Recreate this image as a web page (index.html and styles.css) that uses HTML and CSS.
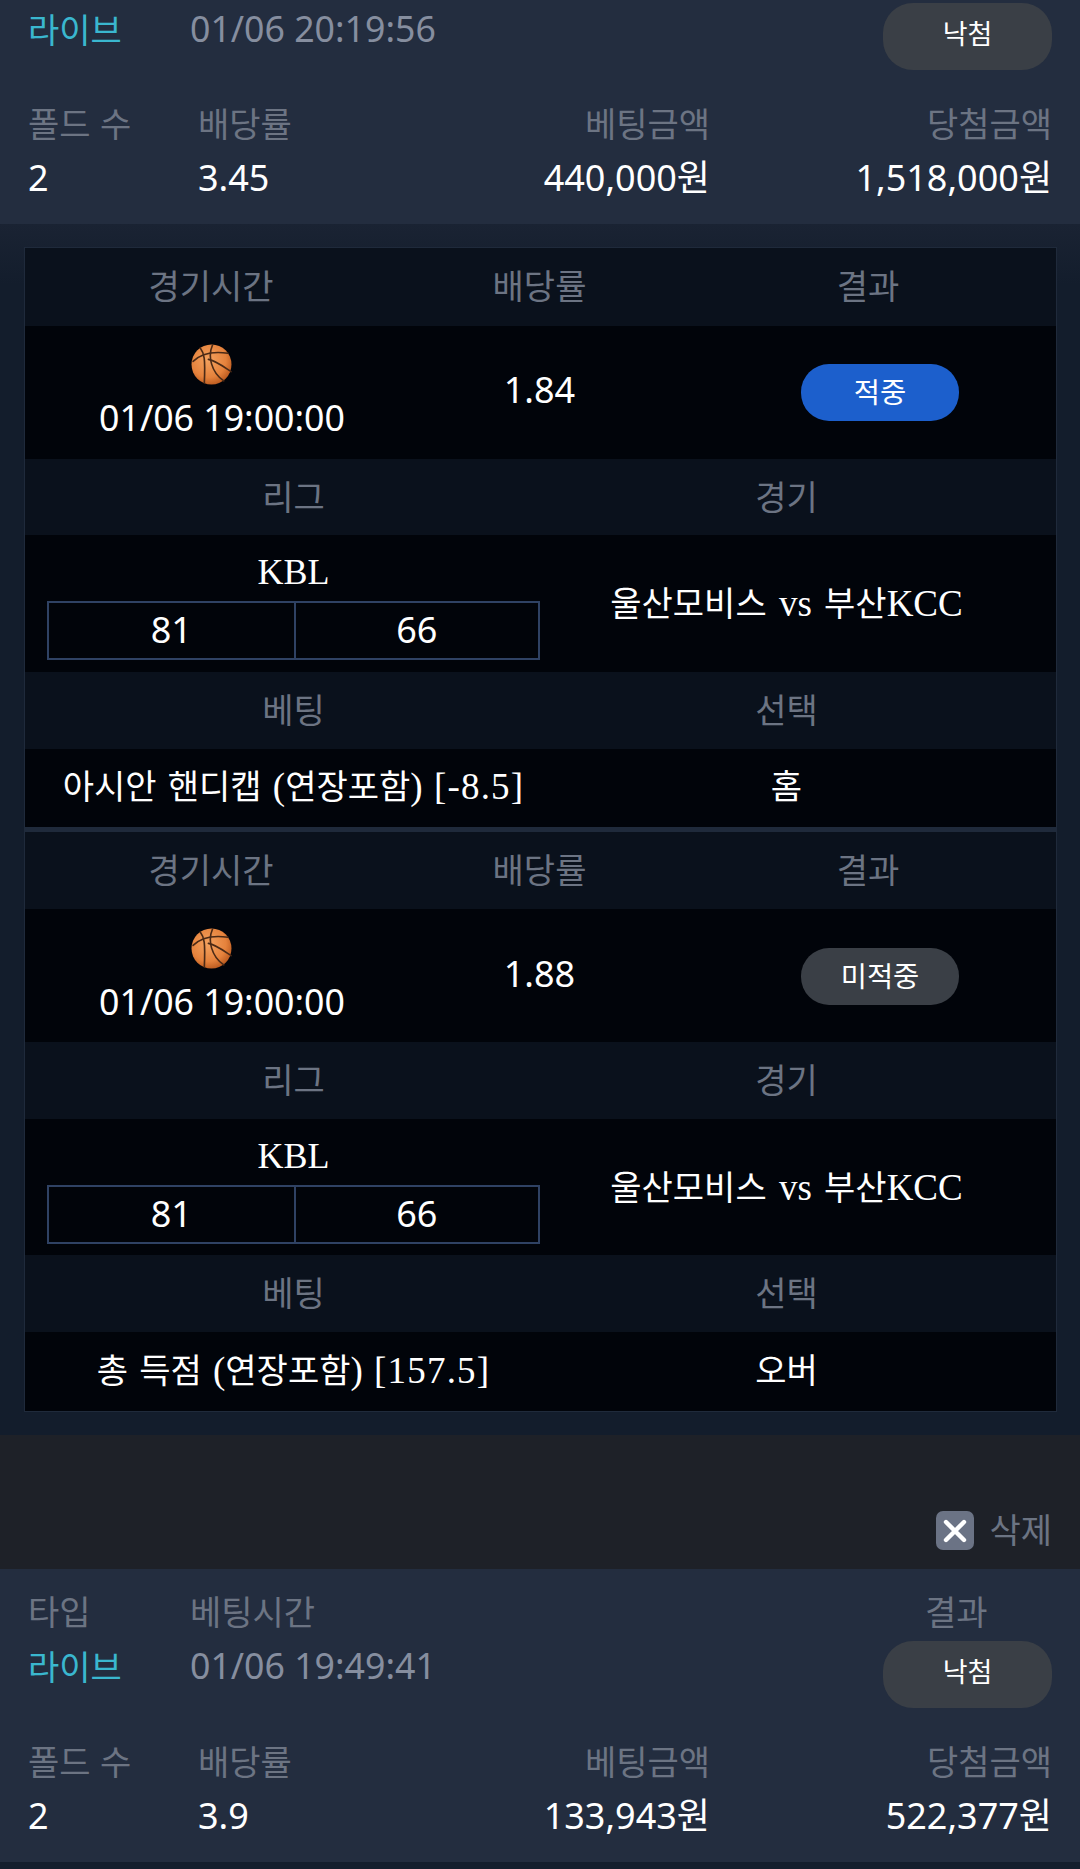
FILE: index.html
```html
<!DOCTYPE html>
<html lang="ko">

<head>
    <meta charset="UTF-8">
    <meta name="viewport" content="width=device-width, initial-scale=1.0">
    <title>베팅내역</title>
    <link rel="stylesheet" href="styles.css">
</head>

<body>
    <svg class="defs" width="0" height="0" aria-hidden="true">
        <defs>
            <radialGradient id="ballFill" cx="42%" cy="38%" r="68%">
                <stop offset="0" stop-color="#f4a25f"/>
                <stop offset="0.65" stop-color="#e5823c"/>
                <stop offset="1" stop-color="#b4541b"/>
            </radialGradient>
            <symbol id="ball" viewBox="0 0 40 40">
                <circle cx="20" cy="20" r="19.5" fill="url(#ballFill)"/>
                <g fill="none" stroke="#4b2a16" stroke-width="1.6" stroke-linecap="round">
                    <path d="M2 17 C10 9 22 7 36 9"/>
                    <path d="M9 4 C13 9 14 14 13 38"/>
                    <path d="M21 1 C16 12 20 28 32 36"/>
                    <path d="M17 15 C24 16 33 23 39 27"/>
                </g>
            </symbol>
        </defs>
    </svg>

    <div class="page">
        <!-- 첫번째 내역 (위쪽이 스크롤로 잘린 상태) -->
        <section class="ticket ticket-cut">
            <div class="ticket-top">
                <div class="col-type">
                    <div class="live">라이브</div>
                </div>
                <div class="col-time">
                    <div class="time">01/06 20:19:56</div>
                </div>
                <div class="col-result">
                    <div class="lost-btn">낙첨</div>
                </div>
            </div>
            <div class="ticket-sum">
                <div class="label">폴드 수</div>
                <div class="label">배당률</div>
                <div class="label right">베팅금액</div>
                <div class="label right">당첨금액</div>
                <div class="value">2</div>
                <div class="value">3.45</div>
                <div class="value right">440,000원</div>
                <div class="value right">1,518,000원</div>
            </div>
        </section>

        <div class="panel">
            <div class="bet-table">
                <div class="head row-three head-first">
                    <div class="shift-time">경기시간</div>
                    <div>배당률</div>
                    <div>결과</div>
                </div>
                <div class="body row-three row-game">
                    <div class="game-time">
                        <svg class="ball"><use href="#ball"/></svg>
                        <div class="game-date">01/06 19:00:00</div>
                    </div>
                    <div class="odds">1.84</div>
                    <div class="result-cell"><span class="pill pill-hit">적중</span></div>
                </div>
                <div class="head row-two">
                    <div>리그</div>
                    <div>경기</div>
                </div>
                <div class="body row-two row-league">
                    <div class="league">
                        <div class="league-name">KBL</div>
                        <div class="score">
                            <div>81</div>
                            <div>66</div>
                        </div>
                    </div>
                    <div class="match"><span class="ko">울산모비스</span> vs <span class="ko">부산</span>KCC</div>
                </div>
                <div class="head row-two">
                    <div>베팅</div>
                    <div>선택</div>
                </div>
                <div class="body row-two row-bet">
                    <div class="mixed"><span class="ko">아시안</span> <span class="ko">핸디캡</span> (<span class="ko">연장포함</span>) <span class="bracket">[-8.5]</span></div>
                    <div class="pick">홈</div>
                </div>

                <div class="divider"></div>

                <div class="head row-three">
                    <div class="shift-time">경기시간</div>
                    <div>배당률</div>
                    <div>결과</div>
                </div>
                <div class="body row-three row-game">
                    <div class="game-time">
                        <svg class="ball"><use href="#ball"/></svg>
                        <div class="game-date">01/06 19:00:00</div>
                    </div>
                    <div class="odds">1.88</div>
                    <div class="result-cell"><span class="pill pill-miss">미적중</span></div>
                </div>
                <div class="head row-two">
                    <div>리그</div>
                    <div>경기</div>
                </div>
                <div class="body row-two row-league">
                    <div class="league">
                        <div class="league-name">KBL</div>
                        <div class="score">
                            <div>81</div>
                            <div>66</div>
                        </div>
                    </div>
                    <div class="match"><span class="ko">울산모비스</span> vs <span class="ko">부산</span>KCC</div>
                </div>
                <div class="head row-two">
                    <div>베팅</div>
                    <div>선택</div>
                </div>
                <div class="body row-two row-bet">
                    <div class="mixed"><span class="ko">총</span> <span class="ko">득점</span> (<span class="ko">연장포함</span>) <span class="bracket">[157.5]</span></div>
                    <div class="pick">오버</div>
                </div>
            </div>
        </div>

        <!-- 두번째 내역 -->
        <div class="delete-bar">
            <span class="delete-x">
                <svg width="24" height="24" viewBox="0 0 24 24"><path d="M3 3 L21 21 M21 3 L3 21" stroke="#fff" stroke-width="4.4" stroke-linecap="round"/></svg>
            </span>
            <span class="delete-text">삭제</span>
        </div>

        <section class="ticket">
            <div class="ticket-top">
                <div class="col-type">
                    <div class="label">타입</div>
                    <div class="live">라이브</div>
                </div>
                <div class="col-time">
                    <div class="label">베팅시간</div>
                    <div class="time">01/06 19:49:41</div>
                </div>
                <div class="col-result">
                    <div class="label">결과</div>
                    <div class="lost-btn">낙첨</div>
                </div>
            </div>
            <div class="ticket-sum">
                <div class="label">폴드 수</div>
                <div class="label">배당률</div>
                <div class="label right">베팅금액</div>
                <div class="label right">당첨금액</div>
                <div class="value">2</div>
                <div class="value">3.9</div>
                <div class="value right">133,943원</div>
                <div class="value right">522,377원</div>
            </div>
        </section>
        <div class="panel-rest"></div>
    </div>
</body>

</html>
```

FILE: styles.css
```css
* {
    margin: 0;
    padding: 0;
    box-sizing: border-box;
}

html,
body {
    height: 1869px;
    overflow: hidden;
    background: #141e2d;
}

body {
    font-family: "Noto Sans CJK KR", "Noto Sans", sans-serif;
    font-size: 34px;
    line-height: 53px;
    color: #fff;
}

.defs {
    position: absolute;
}

.ticket {
    height: 293px;
    padding: 15px 28px 0;
    background: #232d3f;
}

.ticket-cut {
    height: 224px;
    padding-top: 2px;
}

.ticket-top {
    display: flex;
}

.col-type {
    width: 162px;
}

.col-time {
    flex: 1;
}

.col-result {
    width: 169px;
}

.col-result .label {
    padding-left: 42px;
}

.label {
    height: 55px;
    color: #6c7483;
}

.live {
    height: 55px;
    color: #3ab7cf;
}

/* 숫자는 한글보다 크게 보임 */
.time,
.value,
.game-date,
.odds,
.score div {
    font-family: "Noto Sans", "Noto Sans CJK KR", sans-serif;
    font-size: 36px;
}

.time,
.game-date {
    font-size: 35.7px;
}

.time {
    color: #868e9f;
}

.lost-btn {
    height: 67px;
    margin-top: 2px;
    background: #3a3f46;
    border-radius: 30px;
    font-size: 27px;
    line-height: 60px;
    text-align: center;
}

.ticket-cut .lost-btn {
    margin-top: 1px;
}

.ticket-sum {
    display: grid;
    grid-template-columns: 170px 170px 342px 1fr;
    margin-top: 26px;
}

.right {
    text-align: right;
}

.panel {
    padding: 23px 23px 23px 24px;
    background: linear-gradient(#1a2333, #131d2c 5%, #131d2c);
}

.bet-table {
    border: 1px solid #1f2a3b;
    text-align: center;
}

.head {
    height: 77px;
    line-height: 74px;
    background: #0a111c;
    color: #6c7483;
}

.head-first {
    height: 78px;
}

.body {
    background: #01040a;
}

.row-three {
    display: grid;
    grid-template-columns: 372px 285px 372px;
}

.row-two {
    display: grid;
    grid-template-columns: 537px 449px;
}

.row-game {
    height: 133px;
    align-items: center;
}

.row-game + .head {
    height: 76px;
}

/* 아래쪽 경기는 행 높이가 1px씩 다름 */
.divider ~ .row-game {
    padding-top: 2px;
}

.divider ~ .row-game + .head {
    height: 77px;
}

.divider ~ .row-league {
    height: 136px;
}

.game-time {
    display: flex;
    flex-direction: column;
    align-items: center;
    padding-top: 3px;
}

.ball {
    width: 41px;
    height: 41px;
}

.game-date {
    height: 55px;
    margin: 5px 0 0 22px;
    line-height: 55px;
}

.odds {
    margin-bottom: 6px;
}

.pill {
    display: block;
    width: 158px;
    height: 57px;
    margin-left: 119px;
    border-radius: 28px;
    font-size: 28.5px;
    line-height: 53px;
}

.pill-hit {
    background: #1c5fcc;
}

.pill-miss {
    background: #3a3f46;
}

.row-league {
    height: 137px;
}

.league {
    padding: 10px 22px 0;
}

.league-name {
    height: 56px;
    font-family: "Liberation Serif", "Noto Sans CJK KR", serif;
    font-size: 36px;
    line-height: 55px;
}

.score {
    display: grid;
    grid-template-columns: 1fr 1fr;
    height: 59px;
    border: 2px solid #2f4264;
}

.score div {
    line-height: 54px;
}

.score div + div {
    border-left: 2px solid #2f4264;
}

.match,
.mixed {
    font-family: "Liberation Serif", "Noto Sans CJK KR", serif;
    font-size: 37px;
}

.ko {
    font-family: "Noto Sans CJK KR", sans-serif;
    font-size: 34px;
}

.match {
    padding-top: 40px;
    word-spacing: 3px;
}

.mixed {
    word-spacing: 2px;
}

.bracket {
    letter-spacing: 1.2px;
}

.row-bet {
    height: 78px;
    line-height: 72px;
}

.row-bet:last-child {
    height: 79px;
    line-height: 74px;
}

.divider {
    height: 5px;
    background: #1f2a3b;
}

.delete-bar {
    display: flex;
    align-items: flex-end;
    justify-content: flex-end;
    height: 134px;
    padding: 0 28px 19px 0;
    background: #1e2128;
}

.delete-x {
    display: flex;
    align-items: center;
    justify-content: center;
    width: 38px;
    height: 39px;
    margin-right: 15px;
    background: #6b7385;
    border-radius: 7px;
}

.delete-text {
    height: 39px;
    line-height: 35px;
    color: #6c7483;
}

.panel-rest {
    height: 20px;
    background: #141e2d;
}
```
